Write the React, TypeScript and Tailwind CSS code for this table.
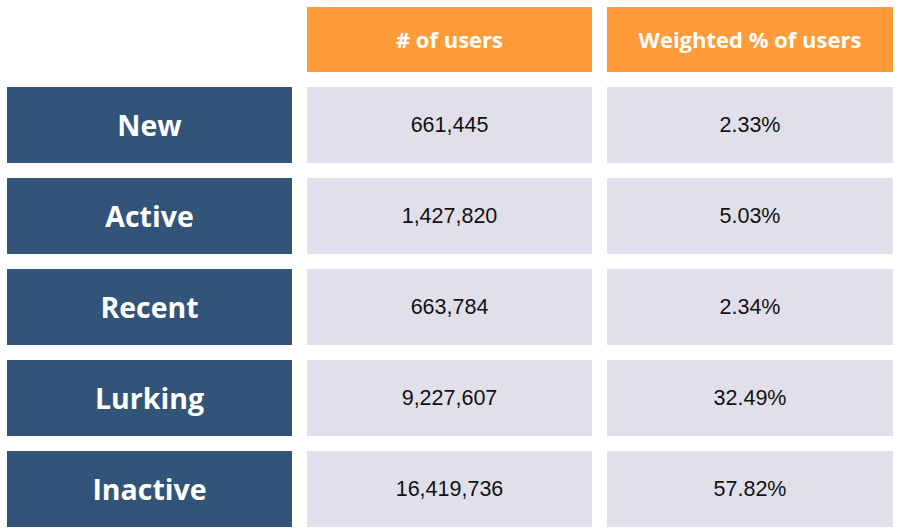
import React from "react";

const rows = [
  { label: "New", users: "661,445", pct: "2.33%" },
  { label: "Active", users: "1,427,820", pct: "5.03%" },
  { label: "Recent", users: "663,784", pct: "2.34%" },
  { label: "Lurking", users: "9,227,607", pct: "32.49%" },
  { label: "Inactive", users: "16,419,736", pct: "57.82%" },
];

const App = () => {
  return (
    <div className="w-[901px] h-[532px] bg-white pt-[7px] pl-[7px] overflow-hidden">
      <div className="grid grid-cols-[285px_285px_286px] gap-x-[15px] gap-y-[15px] grid-rows-[65px_repeat(5,76px)]">
        <div />
        <div className="bg-[#ff9b38] flex items-center justify-center text-white font-bold text-[22px] font-['Open_Sans',sans-serif]">
          # of users
        </div>
        <div className="bg-[#ff9b38] flex items-center justify-center text-white font-bold text-[22px] font-['Open_Sans',sans-serif]">
          Weighted % of users
        </div>

        {rows.map((r) => (
          <React.Fragment key={r.label}>
            <div className="bg-[#335479] flex items-center justify-center text-white font-bold text-[28.5px] font-['Open_Sans',sans-serif]">
              {r.label}
            </div>
            <div className="bg-[#e1e0ea] flex items-center justify-center text-[#111] text-[21.5px] font-['Liberation_Sans',Arial,sans-serif]">
              {r.users}
            </div>
            <div className="bg-[#e1e0ea] flex items-center justify-center text-[#111] text-[21.5px] font-['Liberation_Sans',Arial,sans-serif]">
              {r.pct}
            </div>
          </React.Fragment>
        ))}
      </div>
    </div>
  );
};

export default App;
